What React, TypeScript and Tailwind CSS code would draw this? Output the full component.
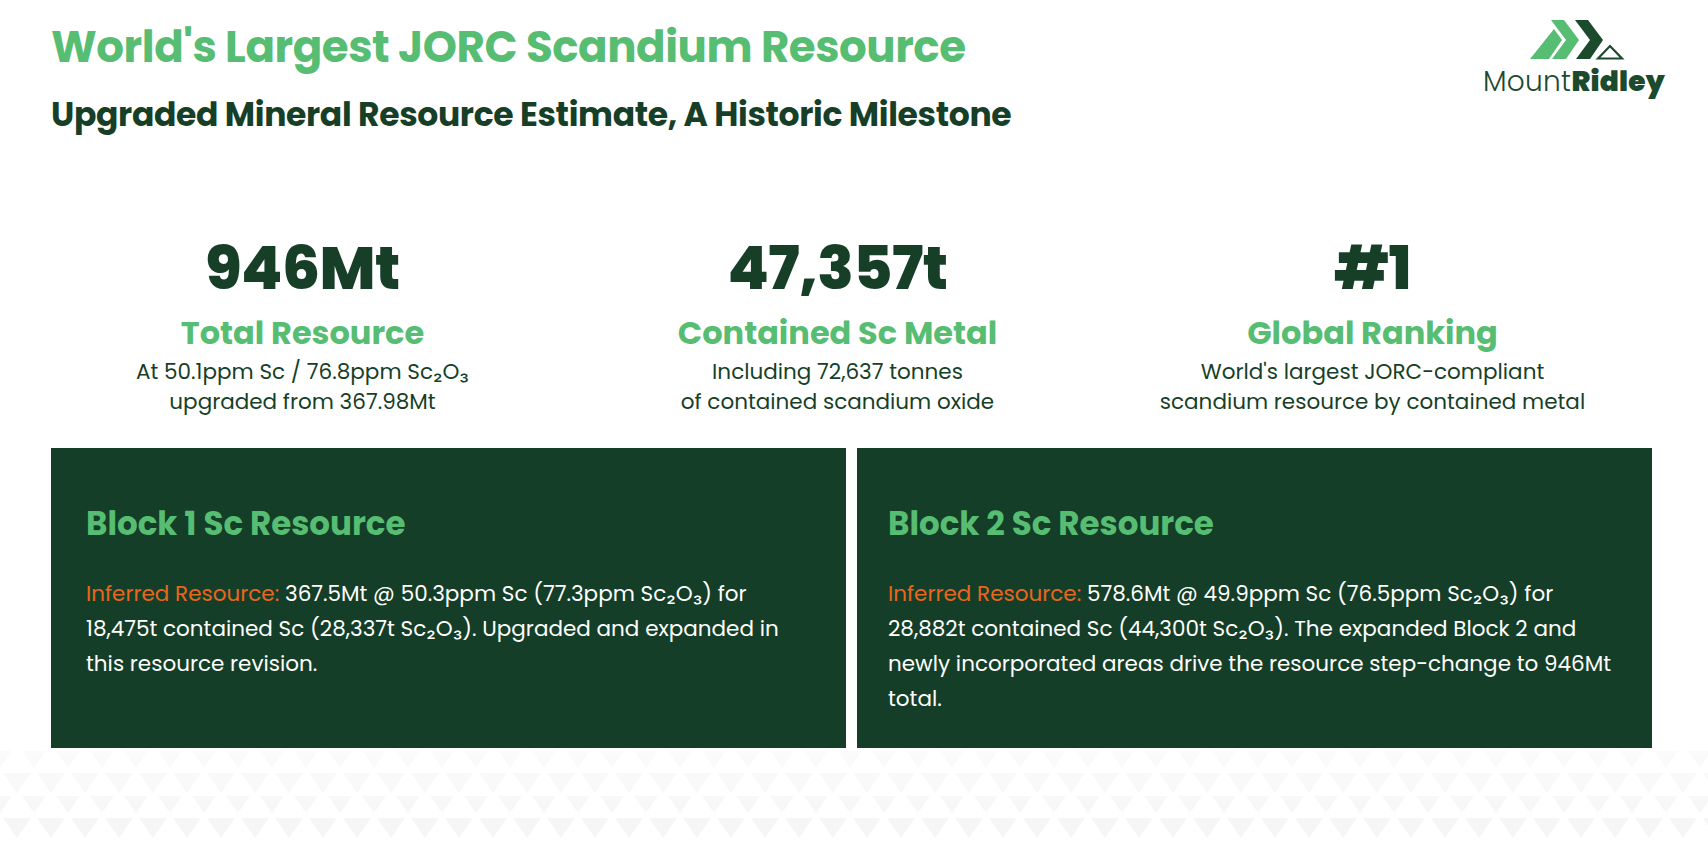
import React from "react";

const stats = [
  {
    value: "946Mt",
    label: "Total Resource",
    lines: ["At 50.1ppm Sc / 76.8ppm Sc₂O₃", "upgraded from 367.98Mt"],
  },
  {
    value: "47,357t",
    label: "Contained Sc Metal",
    lines: ["Including 72,637 tonnes", "of contained scandium oxide"],
  },
  {
    value: "#1",
    label: "Global Ranking",
    lines: ["World's largest JORC-compliant", "scandium resource by contained metal"],
  },
];

const blocks = [
  {
    title: "Block 1 Sc Resource",
    pad: "pl-[35px]",
    lines: [
      "367.5Mt @ 50.3ppm Sc (77.3ppm Sc₂O₃) for",
      "18,475t contained Sc (28,337t Sc₂O₃). Upgraded and expanded in",
      "this resource revision.",
    ],
  },
  {
    title: "Block 2 Sc Resource",
    pad: "pl-[31px]",
    lines: [
      "578.6Mt @ 49.9ppm Sc (76.5ppm Sc₂O₃) for",
      "28,882t contained Sc (44,300t Sc₂O₃). The expanded Block 2 and",
      "newly incorporated areas drive the resource step-change to 946Mt",
      "total.",
    ],
  },
];

function Logo() {
  return (
    <div className="flex w-[185px] flex-col">
      <svg className="ml-[35px] h-[45px] w-[112px]" viewBox="0 0 112 45">
        <polygon points="12,44 36,14 44,25 31,44" fill="#56bd72" />
        <polygon points="33,5 46,5 61,25 48,44 34,44 48,25" fill="#56bd72" />
        <polygon points="57,5 70,5 85,25 72,44 58,44 72,25" fill="#1b4a2d" />
        <polygon points="80,43.5 92,31 104,43.5" fill="none" stroke="#1b4a2d" strokeWidth="2.2" />
      </svg>
      <div className="mt-[8px] whitespace-nowrap text-[28px] leading-none text-[#1b4a2d]">
        <span className="font-light tracking-[0.01em]">Mount</span>
        <span className="font-black tracking-[0.01em]">Ridley</span>
      </div>
    </div>
  );
}

function TrianglePattern() {
  return (
    <svg className="h-full w-full" preserveAspectRatio="none">
      <defs>
        <pattern id="tri" x="0" y="0" width="34" height="45" patternUnits="userSpaceOnUse">
          <polygon points="-12,0 12,0 0,17" fill="#f1f1f1" />
          <polygon points="22,0 46,0 34,17" fill="#f1f1f1" />
          <polygon points="3,22 31,22 17,42" fill="#f1f1f1" />
        </pattern>
        <linearGradient id="fade" x1="0" y1="0" x2="0" y2="1">
          <stop offset="0" stopColor="#fff" stopOpacity="0.3" />
          <stop offset="1" stopColor="#fff" stopOpacity="1" />
        </linearGradient>
        <mask id="fadeMask">
          <rect width="100%" height="100%" fill="url(#fade)" />
        </mask>
      </defs>
      <rect width="100%" height="100%" fill="url(#tri)" mask="url(#fadeMask)" />
    </svg>
  );
}

export default function App() {
  return (
    <div className="flex h-[841px] w-[1708px] flex-col overflow-hidden bg-white font-['Poppins','Inter',sans-serif]">
      {/* Header */}
      <header className="flex items-start justify-between pl-[51px] pr-[40px] pt-[15px]">
        <div className="pt-[10px]">
          <h1 className="text-[43.5px] font-bold leading-none tracking-[-0.01em] text-[#56bd72]">
            World's Largest JORC Scandium Resource
          </h1>
          <h2 className="mt-[29px] text-[33px] font-bold leading-none tracking-[-0.01em] text-[#173f28]">
            Upgraded Mineral Resource Estimate, A Historic Milestone
          </h2>
        </div>
        <Logo />
      </header>

      {/* Stats */}
      <section className="mt-[107px] grid grid-cols-3 pl-[35px] pr-[68px]">
        {stats.map((s) => (
          <div key={s.label} className="flex flex-col items-center text-center">
            <div className="text-[60px] font-extrabold leading-none tracking-[-0.01em] text-[#173f28]">
              {s.value}
            </div>
            <div className="mt-[19px] text-[32px] font-bold leading-none text-[#56bd72]">{s.label}</div>
            <p className="mt-[8px] text-[21.5px] leading-[30px] text-[#173f28]">
              {s.lines[0]}
              <br />
              {s.lines[1]}
            </p>
          </div>
        ))}
      </section>

      {/* Resource blocks */}
      <section className="mt-[31px] grid grid-cols-2 gap-[11px] pl-[51px] pr-[56px]">
        {blocks.map((b) => (
          <div key={b.title} className={`h-[300px] bg-[#143e27] pr-[30px] pt-[60px] ${b.pad}`}>
            <h3 className="text-[32.5px] font-bold leading-none text-[#56bd72]">{b.title}</h3>
            <p className="mt-[36px] whitespace-nowrap text-[21.5px] leading-[35px] text-white">
              <span className="text-[#e8661f]">Inferred Resource: </span>
              {b.lines.map((l, i) => (
                <React.Fragment key={i}>
                  {i > 0 && <br />}
                  {l}
                </React.Fragment>
              ))}
            </p>
          </div>
        ))}
      </section>

      <div className="flex-1 pt-[3px]">
        <TrianglePattern />
      </div>
    </div>
  );
}
